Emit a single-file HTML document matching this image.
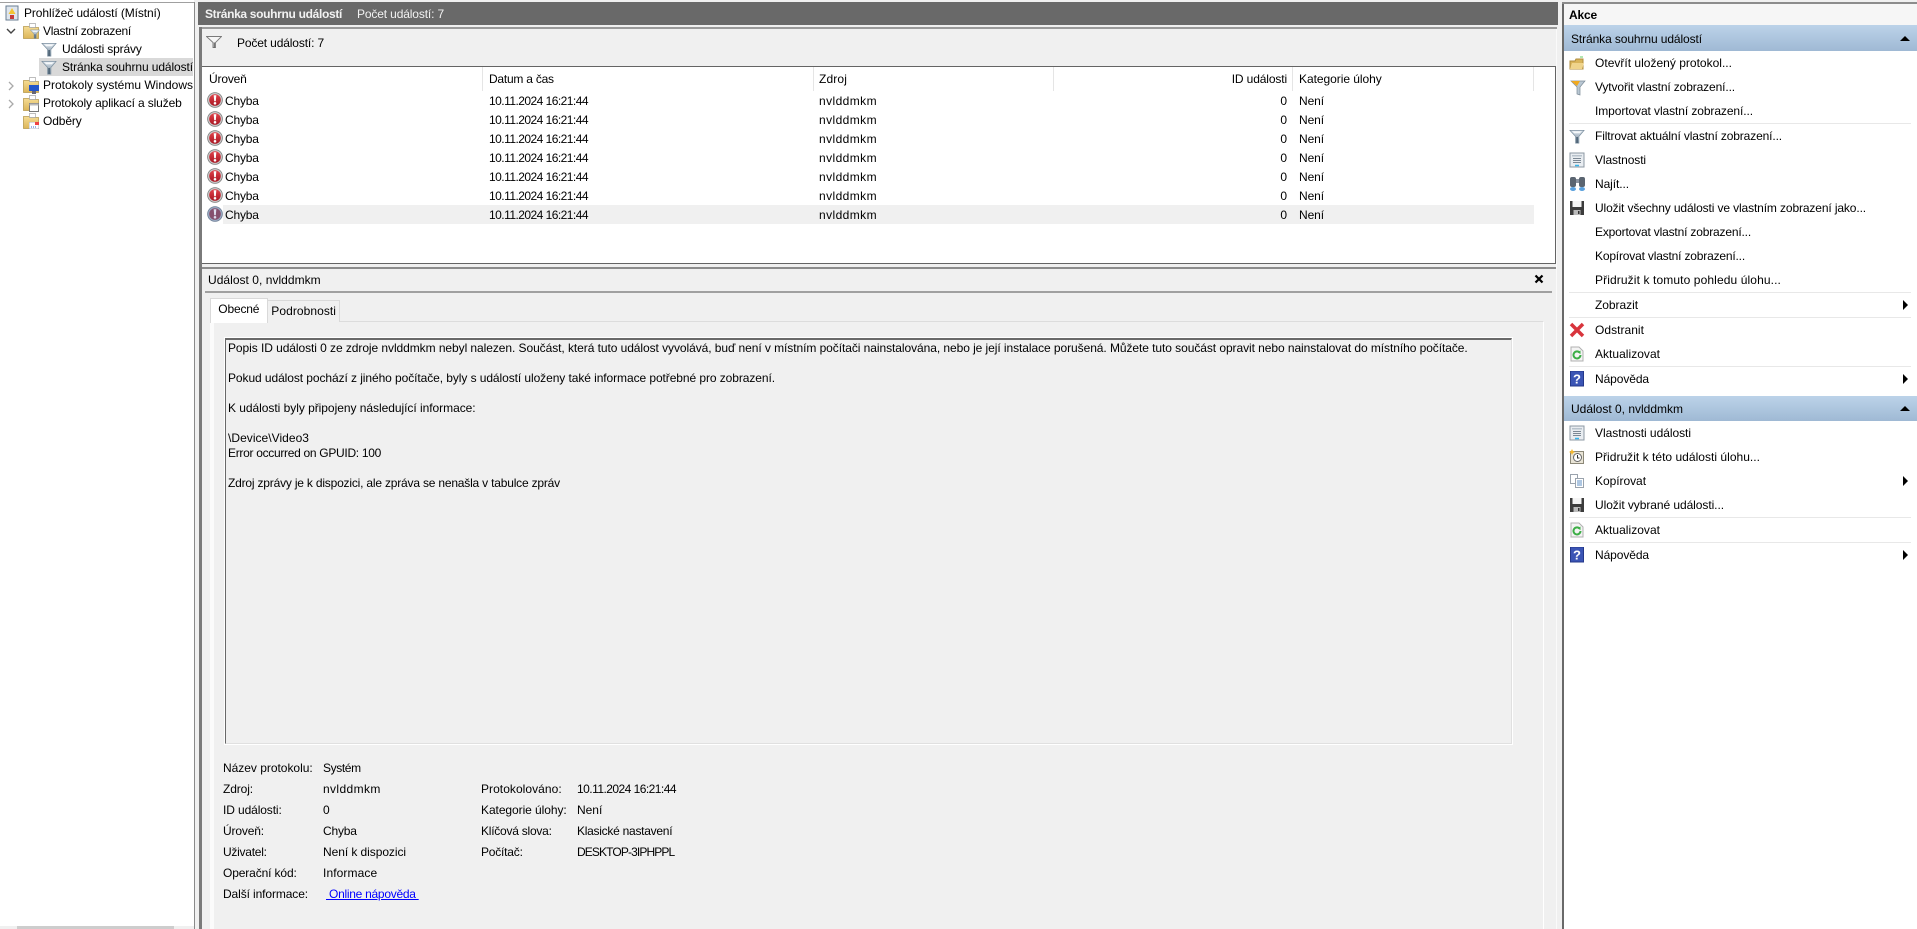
<!DOCTYPE html>
<html><head><meta charset="utf-8"><style>
html,body{margin:0;padding:0;width:1917px;height:929px;overflow:hidden;background:#f0f0f0;font:12px/16px "Liberation Sans",sans-serif;color:#000}
div,span,a,svg{position:absolute;white-space:nowrap}
.sep{background:#e8e8e8;height:1px;left:1569px;width:342px}
.grad{left:1564px;width:353px;background:linear-gradient(#bcd3e9,#9fb9d4)}
.tri{width:0;height:0;border-left:5px solid transparent;border-right:5px solid transparent;border-bottom:5px solid #000;left:1900px}
.arr{width:0;height:0;border-top:5px solid transparent;border-bottom:5px solid transparent;border-left:5px solid #000;left:1903px}
.h{width:1px;top:67px;height:24px;background:#e5e5e5}
.c{left:225px;--e:258.8}.d{left:489px;--e:588}.n{left:819px;--e:877}.z{right:630px}.k{left:1299px;--e:1324}
.p{left:1595px}
</style></head><body>
<svg width="0" height="0" style="left:0;top:0"><defs>
<linearGradient id="fg" x1="0" y1="0" x2="0" y2="1"><stop offset="0" stop-color="#dfe7ee"/><stop offset="1" stop-color="#6f8496"/></linearGradient>
<linearGradient id="rg" x1="0" y1="0" x2="0" y2="1"><stop offset="0" stop-color="#e2434b"/><stop offset="1" stop-color="#a81622"/></linearGradient>
<linearGradient id="gg" x1="0" y1="0" x2="0" y2="1"><stop offset="0" stop-color="#f5dc94"/><stop offset="1" stop-color="#dcb558"/></linearGradient>
<symbol id="fun" viewBox="0 0 16 16"><path d="M.5 1.500h15L10 8v7H6.500V8z" fill="url(#fg)" stroke="#7f92a2" stroke-width=".8"/><path d="M3 2.500h10L11 4.500H5z" fill="#f5f8fa"/><path d="M7.200 8.500h1.800V15H7.200z" fill="#4e6476"/></symbol>
<symbol id="err" viewBox="0 0 16 16"><circle cx="8" cy="8" r="7.800" fill="#7c7c7c"/><circle cx="8" cy="8" r="7" fill="#c9c9c9"/><circle cx="8" cy="8" r="5.800" fill="url(#rg)"/><path d="M6.700 3.200h2.600l-.5 6H7.200z" fill="#fff"/><circle cx="8" cy="11.300" r="1.300" fill="#fff"/></symbol>
<symbol id="err2" viewBox="0 0 16 16"><circle cx="8" cy="8" r="7.800" fill="#6c7c94"/><circle cx="8" cy="8" r="7" fill="#9aaac2"/><circle cx="8" cy="8" r="5.800" fill="#85506e"/><path d="M6.700 3.200h2.600l-.5 6H7.200z" fill="#dde"/><circle cx="8" cy="11.300" r="1.300" fill="#dde"/></symbol>
<symbol id="fold" viewBox="0 0 16 16"><path d="M.5 3.500h6l1 1h8v11H.5z" fill="url(#gg)" stroke="#b79b4f" stroke-width=".8"/><path d="M6.500 .5h6v4h-6z" fill="#fff" stroke="#a8a8a8" stroke-width=".7"/></symbol>
<symbol id="prop" viewBox="0 0 16 16"><rect x="1" y="1" width="14" height="14" fill="#e9edf1" stroke="#8c98a3"/><path d="M3 3h10v1.500H3z" fill="#b8c2cc"/><path d="M4 6.500h8M4 8.500h8M4 10.500h8" stroke="#7c8894"/><path d="M6 13.500h4" stroke="#37b4ea" stroke-width="1.500"/></symbol>
<symbol id="save" viewBox="0 0 16 16"><path d="M1 1h14v14H1z" fill="#3c3c3c"/><path d="M3.500 1h9v6h-9z" fill="#f4f4f4"/><path d="M4.500 10h7v5h-7z" fill="#bbb"/><path d="M9 11h1.500v3H9z" fill="#333"/></symbol>
<symbol id="ref" viewBox="0 0 16 16"><path d="M2 1h8l4 4v10H2z" fill="#f4f4f4" stroke="#b0b0b0"/><path d="M11.500 9a3.500 3.500 0 1 1-1.200-2.700" fill="none" stroke="#3cae46" stroke-width="2"/><path d="M8.500 6.500l3-2v3.500z" fill="#3cae46"/></symbol>
<symbol id="help" viewBox="0 0 16 16"><rect x="1.500" y="0" width="13" height="15" fill="#3b55b5"/><rect x="1.500" y="0" width="13" height="15" fill="none" stroke="#24388a"/><text x="8" y="12.500" font-size="13" font-weight="bold" text-anchor="middle" fill="#fff" font-family="Liberation Sans">?</text></symbol>
</defs></svg>

<!-- left tree -->
<div style="left:0;top:0;width:194px;height:929px;background:#fff"></div>
<div style="left:0;top:2px;width:195px;height:1px;background:#a0a0a0"></div>
<div style="left:194px;top:2px;width:1px;height:927px;background:#8a8a8a"></div>
<div style="left:0;top:926px;width:194px;height:3px;background:#f0f0f0"></div>
<div style="left:17px;top:926px;width:157px;height:3px;background:#cdcdcd"></div>
<div style="left:39px;top:58px;width:154px;height:18px;background:#d9d9d9"></div>

<svg width="16" height="16" style="left:4px;top:5px" viewBox="0 0 16 16"><rect x="2" y="1" width="12" height="14" fill="#dfe6ee" stroke="#6a7d92"/><path d="M8 3l3.500 6h-7z" fill="#f3c433"/><rect x="6" y="10" width="4" height="4" fill="#c63b3b"/></svg>
<span style="left:24px;top:5px;--e:160.7">Prohlížeč událostí (Místní)</span>
<svg width="10" height="10" style="left:6px;top:26px" viewBox="0 0 10 10"><path d="M1 3l4 4 4-4" fill="none" stroke="#444" stroke-width="1.400"/></svg>
<svg width="16" height="16" style="left:23px;top:23px"><use href="#fold"/></svg>
<svg width="10" height="10" style="left:30px;top:29px"><use href="#fun"/></svg>
<span style="left:43px;top:23px;--e:131">Vlastní zobrazení</span>
<svg width="16" height="15" style="left:41px;top:42px"><use href="#fun"/></svg>
<span style="left:62px;top:41px;--e:141.7">Události správy</span>
<svg width="16" height="15" style="left:41px;top:60px"><use href="#fun"/></svg>
<span style="left:62px;top:59px;--e:193">Stránka souhrnu událostí</span>
<svg width="10" height="10" style="left:6px;top:81px" viewBox="0 0 10 10"><path d="M3 1l4 4-4 4" fill="none" stroke="#aaa" stroke-width="1.300"/></svg>
<svg width="16" height="16" style="left:23px;top:77px"><use href="#fold"/></svg>
<svg width="10" height="9" style="left:29px;top:85px" viewBox="0 0 10 9"><rect width="10" height="6" fill="#2456c9"/><rect x="3" y="6" width="4" height="3" fill="#667"/></svg>
<span style="left:43px;top:77px;--e:193">Protokoly systému Windows</span>
<svg width="10" height="10" style="left:6px;top:99px" viewBox="0 0 10 10"><path d="M3 1l4 4-4 4" fill="none" stroke="#aaa" stroke-width="1.300"/></svg>
<svg width="16" height="16" style="left:23px;top:95px"><use href="#fold"/></svg>
<svg width="10" height="9" style="left:29px;top:103px" viewBox="0 0 10 9"><rect x=".5" y=".5" width="9" height="8" fill="#fff" stroke="#777"/><rect x=".5" y=".5" width="9" height="2" fill="#bbb"/></svg>
<span style="left:43px;top:95px;--e:181.7">Protokoly aplikací a služeb</span>
<svg width="16" height="16" style="left:23px;top:113px"><use href="#fold"/></svg>
<svg width="10" height="7" style="left:29px;top:122px" viewBox="0 0 10 7"><rect width="10" height="7" fill="#fff" stroke="#7a8ba0" stroke-width=".6"/><rect x="6" y="0" width="4" height="3" fill="#e44"/><path d="M2 5h1M4 5h1M6 5h1" stroke="#36c"/></svg>
<span style="left:43px;top:113px;--e:81.7">Odběry</span>

<!-- center -->
<div style="left:195px;top:0;width:3px;height:929px;background:#f0f0f0"></div>
<div style="left:198px;top:2px;width:1360px;height:23px;background:#696969"></div>
<span style="left:205px;top:6px;color:#f2f2f2;font-weight:bold;--e:342">Stránka souhrnu událostí</span>
<span style="left:357px;top:6px;color:#f2f2f2;--e:444">Počet událostí: 7</span>

<div style="left:199px;top:27px;width:1358px;height:2px;background:#9a9a9a"></div>
<div style="left:199px;top:27px;width:3px;height:902px;background:#7a7a7a"></div>
<div style="left:1556px;top:29px;width:1px;height:900px;background:#fafafa"></div>
<svg width="16" height="12" style="left:206px;top:36px" viewBox="0 0 16 12" preserveAspectRatio="none"><path d="M.5 .5h15L9.500 6.500v5H7V6.500z" fill="#f6f6f6" stroke="#7a7a7a" stroke-width=".9"/><path d="M7.800 6.500h1V11.500h-1z" fill="#555"/></svg>
<span style="left:237px;top:35px;--e:324">Počet událostí: 7</span>

<div style="left:202px;top:66px;width:1353px;height:196px;background:#fff;border-top:1px solid #646464;border-right:1px solid #646464;border-bottom:1px solid #646464"></div>
<div class="h" style="left:482px"></div><div class="h" style="left:813px"></div><div class="h" style="left:1053px"></div><div class="h" style="left:1292px"></div><div class="h" style="left:1533px"></div>
<span style="left:209px;top:71px;--e:246.7">Úroveň</span>
<span style="left:489px;top:71px;--e:553.8">Datum a čas</span>
<span style="left:819px;top:71px;--e:847">Zdroj</span>
<span style="left:1231.700px;top:71px;--e:1287">ID události</span>
<span style="left:1299px;top:71px;--e:1381.700">Kategorie úlohy</span>

<div style="left:223px;top:205px;width:1311px;height:19px;background:#f0f0f0"></div>

<svg width="16" height="16" style="left:207px;top:92px"><use href="#err"/></svg><span class="c" style="top:93px">Chyba</span><span class="d" style="top:93px">10.11.2024 16:21:44</span><span class="n" style="top:93px">nvlddmkm</span><span class="z" style="top:93px">0</span><span class="k" style="top:93px">Není</span>
<svg width="16" height="16" style="left:207px;top:111px"><use href="#err"/></svg><span class="c" style="top:112px">Chyba</span><span class="d" style="top:112px">10.11.2024 16:21:44</span><span class="n" style="top:112px">nvlddmkm</span><span class="z" style="top:112px">0</span><span class="k" style="top:112px">Není</span>
<svg width="16" height="16" style="left:207px;top:130px"><use href="#err"/></svg><span class="c" style="top:131px">Chyba</span><span class="d" style="top:131px">10.11.2024 16:21:44</span><span class="n" style="top:131px">nvlddmkm</span><span class="z" style="top:131px">0</span><span class="k" style="top:131px">Není</span>
<svg width="16" height="16" style="left:207px;top:149px"><use href="#err"/></svg><span class="c" style="top:150px">Chyba</span><span class="d" style="top:150px">10.11.2024 16:21:44</span><span class="n" style="top:150px">nvlddmkm</span><span class="z" style="top:150px">0</span><span class="k" style="top:150px">Není</span>
<svg width="16" height="16" style="left:207px;top:168px"><use href="#err"/></svg><span class="c" style="top:169px">Chyba</span><span class="d" style="top:169px">10.11.2024 16:21:44</span><span class="n" style="top:169px">nvlddmkm</span><span class="z" style="top:169px">0</span><span class="k" style="top:169px">Není</span>
<svg width="16" height="16" style="left:207px;top:187px"><use href="#err"/></svg><span class="c" style="top:188px">Chyba</span><span class="d" style="top:188px">10.11.2024 16:21:44</span><span class="n" style="top:188px">nvlddmkm</span><span class="z" style="top:188px">0</span><span class="k" style="top:188px">Není</span>
<svg width="16" height="16" style="left:207px;top:206px"><use href="#err2"/></svg><span class="c" style="top:207px">Chyba</span><span class="d" style="top:207px">10.11.2024 16:21:44</span><span class="n" style="top:207px">nvlddmkm</span><span class="z" style="top:207px">0</span><span class="k" style="top:207px">Není</span>

<!-- detail -->
<div style="left:202px;top:267px;width:1354px;height:2px;background:#8c8c8c"></div>
<span style="left:208px;top:272px;--e:320.7">Událost 0, nvlddmkm</span>
<svg width="10" height="10" style="left:1534px;top:274px" viewBox="0 0 10 10"><path d="M1.500 1.500l7 7M8.500 1.500l-7 7" stroke="#000" stroke-width="2.200"/></svg>
<div style="left:205px;top:291px;width:1347px;height:2px;background:#a0a0a0"></div>

<div style="left:210px;top:321px;width:1334px;height:608px;background:#f0f0f0;border-top:1px solid #dcdcdc;border-right:1px solid #fff;box-sizing:border-box"></div>
<div style="left:210px;top:322px;width:4px;height:607px;background:#fbfbfb"></div>
<div style="left:210px;top:298px;width:56px;height:24px;background:#fff;border:1px solid #d9d9d9;border-bottom:0"></div>
<div style="left:267px;top:300px;width:71px;height:21px;background:#f0f0f0;border:1px solid #d9d9d9;border-bottom:0"></div>
<span style="left:218.300px;top:301px;--e:259.3">Obecné</span>
<span style="left:271.300px;top:303px;--e:336">Podrobnosti</span>

<div style="left:225px;top:338px;width:1287px;height:406px;box-sizing:border-box;background:#f0f0f0;border-top:2px solid #696969;border-left:1px solid #696969;border-right:1px solid #e0e0e0;border-bottom:1px solid #e0e0e0;outline:1px solid #fff"></div>
<span style="left:228px;top:340px;--e:1467.7">Popis ID události 0 ze zdroje nvlddmkm nebyl nalezen. Součást, která tuto událost vyvolává, buď není v místním počítači nainstalována, nebo je její instalace porušená. Můžete tuto součást opravit nebo nainstalovat do místního počítače.</span>
<span style="left:228px;top:370px;--e:775">Pokud událost pochází z jiného počítače, byly s událostí uloženy také informace potřebné pro zobrazení.</span>
<span style="left:228px;top:400px;--e:475.6">K události byly připojeny následující informace:</span>
<span style="left:228px;top:430px;--e:309">\Device\Video3</span>
<span style="left:228px;top:445px;--e:381">Error occurred on GPUID: 100</span>
<span style="left:228px;top:475px;--e:560">Zdroj zprávy je k dispozici, ale zpráva se nenašla v tabulce zpráv</span>

<span style="left:223px;top:760px;--e:312.7">Název protokolu:</span><span style="left:323px;top:760px;--e:360.7">Systém</span>
<span style="left:223px;top:781px;--e:253">Zdroj:</span><span style="left:323px;top:781px;--e:380.7">nvlddmkm</span>
<span style="left:223px;top:802px;--e:281.7">ID události:</span><span style="left:323px;top:802px">0</span>
<span style="left:223px;top:823px;--e:264">Úroveň:</span><span style="left:323px;top:823px;--e:356.7">Chyba</span>
<span style="left:223px;top:844px;--e:266.7">Uživatel:</span><span style="left:323px;top:844px;--e:406">Není k dispozici</span>
<span style="left:223px;top:865px;--e:296.7">Operační kód:</span><span style="left:323px;top:865px;--e:377.3">Informace</span>
<span style="left:223px;top:886px;--e:308">Další informace:</span><a style="left:326px;top:886px;color:#00f;text-decoration:underline;--e:418.7">&nbsp;Online nápověda&nbsp;</a>
<span style="left:481px;top:781px;--e:561.7">Protokolováno:</span><span style="left:577px;top:781px;--e:676">10.11.2024 16:21:44</span>
<span style="left:481px;top:802px;--e:566.7">Kategorie úlohy:</span><span style="left:577px;top:802px;--e:602.3">Není</span>
<span style="left:481px;top:823px;--e:551.7">Klíčová slova:</span><span style="left:577px;top:823px;--e:672.3">Klasické nastavení</span>
<span style="left:481px;top:844px;--e:522.7">Počítač:</span><span style="left:577px;top:844px;--e:674.3">DESKTOP-3IPHPPL</span>

<!-- right panel -->
<div style="left:1562px;top:2px;width:355px;height:927px;background:#fff"></div>
<div style="left:1562px;top:2px;width:2px;height:927px;background:#696969"></div>
<div style="left:1562px;top:2px;width:355px;height:2px;background:#8c8c8c"></div>
<div style="left:1564px;top:4px;width:353px;height:21px;background:#f6f6f6"></div>
<span style="left:1569px;top:7px;font-weight:bold;--e:1597">Akce</span>
<div class="grad" style="top:25px;height:26px"></div>
<span style="left:1571px;top:31px;--e:1702">Stránka souhrnu událostí</span>
<div class="tri" style="top:36px"></div>

<svg width="16" height="16" style="left:1569px;top:55px" viewBox="0 0 16 16"><path d="M1 6h5l1-2h7v10H1z" fill="#d9b45a" stroke="#b08d3d"/><path d="M1 14l2-6h12l-2 6z" fill="#efd48c"/><path d="M11 2h3" stroke="#6c6"/></svg>
<span class="p" style="top:55px;--e:1732">Otevřít uložený protokol...</span>
<svg width="16" height="16" style="left:1570px;top:80px" viewBox="0 0 16 16"><path d="M1 1h14l-5 6v8l-3-1V7z" fill="#b9c7d3" stroke="#7b8a97" stroke-width=".7"/><path d="M1 1h9l-3 5z" fill="#f0a91f"/></svg>
<span class="p" style="top:79px;--e:1735">Vytvořit vlastní zobrazení...</span>
<span class="p" style="top:103px;--e:1753">Importovat vlastní zobrazení...</span>
<div class="sep" style="top:123px"></div>
<svg width="16" height="15" style="left:1569px;top:129px"><use href="#fun"/></svg>
<span class="p" style="top:128px;--e:1782">Filtrovat aktuální vlastní zobrazení...</span>
<svg width="16" height="16" style="left:1569px;top:152px"><use href="#prop"/></svg>
<span class="p" style="top:152px;--e:1646">Vlastnosti</span>
<svg width="17" height="16" style="left:1569px;top:176px" viewBox="0 0 17 16"><rect x="1" y="1" width="6" height="10" rx="2" fill="#5a6470"/><rect x="10" y="1" width="6" height="10" rx="2" fill="#5a6470"/><rect x="7" y="3" width="3" height="4" fill="#8a93a0"/><ellipse cx="4" cy="13" rx="3" ry="2" fill="#5aa0dd"/><ellipse cx="13" cy="13" rx="3" ry="2" fill="#5aa0dd"/></svg>
<span class="p" style="top:176px;--e:1629">Najít...</span>
<svg width="16" height="16" style="left:1569px;top:200px"><use href="#save"/></svg>
<span class="p" style="top:200px;--e:1866">Uložit všechny události ve vlastním zobrazení jako...</span>
<span class="p" style="top:224px;--e:1751">Exportovat vlastní zobrazení...</span>
<span class="p" style="top:248px;--e:1745">Kopírovat vlastní zobrazení...</span>
<span class="p" style="top:272px;--e:1781">Přidružit k tomuto pohledu úlohu...</span>
<div class="sep" style="top:292px"></div>
<span class="p" style="top:297px;--e:1638">Zobrazit</span>
<div class="arr" style="top:300px"></div>
<div class="sep" style="top:317px"></div>
<svg width="16" height="16" style="left:1569px;top:322px" viewBox="0 0 16 16"><path d="M2 2l12 12M14 2L2 14" stroke="#d8343c" stroke-width="3.500"/></svg>
<span class="p" style="top:322px;--e:1644">Odstranit</span>
<svg width="16" height="16" style="left:1569px;top:346px"><use href="#ref"/></svg>
<span class="p" style="top:346px;--e:1660">Aktualizovat</span>
<div class="sep" style="top:366px"></div>
<svg width="16" height="16" style="left:1569px;top:371px"><use href="#help"/></svg>
<span class="p" style="top:371px;--e:1649">Nápověda</span>
<div class="arr" style="top:374px"></div>

<div class="grad" style="top:396px;height:25px"></div>
<span style="left:1571px;top:401px;--e:1683">Událost 0, nvlddmkm</span>
<div class="tri" style="top:406px"></div>
<svg width="16" height="16" style="left:1569px;top:425px"><use href="#prop"/></svg>
<span class="p" style="top:425px;--e:1691">Vlastnosti události</span>
<svg width="16" height="16" style="left:1569px;top:449px" viewBox="0 0 16 16"><rect x="1.500" y="2.500" width="13" height="12" fill="#e9e4d6" stroke="#8c8878"/><circle cx="8.500" cy="8.500" r="4" fill="#fff" stroke="#666"/><path d="M8.500 6v3h2" fill="none" stroke="#333"/><path d="M3 0l1 2 2 1-2 1-1 2-1-2-2-1 2-1z" fill="#f5b82e"/></svg>
<span class="p" style="top:449px;--e:1760">Přidružit k této události úlohu...</span>
<svg width="16" height="16" style="left:1569px;top:473px" viewBox="0 0 16 16"><path d="M1.500 1.500h7v9h-7z" fill="#fff" stroke="#9aa3ad"/><path d="M6.500 5.500h8v9h-8z" fill="#fff" stroke="#9aa3ad"/><path d="M8 8h5M8 10h5M8 12h5" stroke="#5d8fc4"/></svg>
<span class="p" style="top:473px;--e:1646">Kopírovat</span>
<div class="arr" style="top:476px"></div>
<svg width="16" height="16" style="left:1569px;top:497px"><use href="#save"/></svg>
<span class="p" style="top:497px;--e:1724">Uložit vybrané události...</span>
<div class="sep" style="top:517px"></div>
<svg width="16" height="16" style="left:1569px;top:522px"><use href="#ref"/></svg>
<span class="p" style="top:522px;--e:1660">Aktualizovat</span>
<div class="sep" style="top:542px"></div>
<svg width="16" height="16" style="left:1569px;top:547px"><use href="#help"/></svg>
<span class="p" style="top:547px;--e:1649">Nápověda</span>
<div class="arr" style="top:550px"></div>
<script>
document.querySelectorAll('span,a').forEach(function(s){
  var e=parseFloat(getComputedStyle(s).getPropertyValue('--e'));
  if(!e)return;
  var r=s.getBoundingClientRect(),n=s.textContent.length;
  s.style.letterSpacing=((e-r.right)/n).toFixed(3)+'px';
});
</script>
</body></html>
